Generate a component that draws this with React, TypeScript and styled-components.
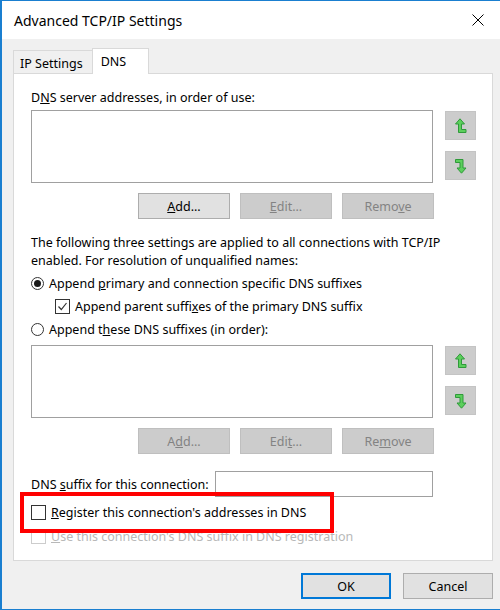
import React from 'react';
import styled, { createGlobalStyle } from 'styled-components';

const GlobalStyle = createGlobalStyle`
  html, body {
    margin: 0;
    padding: 0;
    background: #ffffff;
  }
  body {
    font-family: 'Noto Sans', 'Liberation Sans', sans-serif;
    font-size: 12.5px;
    color: #000000;
  }
`;

const Window = styled.div`
  position: relative;
  width: 498px;
  height: 608px;
  border-left: 2px solid #1a7fd0;
  border-top: 1px solid #1a7fd0;
  border-bottom: 1px solid #1a7fd0;
  display: flex;
  flex-direction: column;
  overflow: hidden;
`;

const TitleBar = styled.div`
  height: 38px;
  background: #ffffff;
  display: flex;
  align-items: center;
  justify-content: space-between;
  padding: 0 16px 0 12px;
  font-size: 14px;
`;

const CloseIcon = styled.svg`
  width: 12px;
  height: 12px;
`;

const Body = styled.div`
  flex: 1;
  background: #f0f0f0;
  padding: 9px 7px 0 11px;
  display: flex;
  flex-direction: column;
`;

const TabRow = styled.div`
  display: flex;
  align-items: flex-end;
  height: 25px;
`;

const Tab = styled.div<{ $active?: boolean }>`
  height: ${({ $active }) => ($active ? '26px' : '23px')};
  min-width: ${({ $active }) => ($active ? '57px' : '0')};
  padding: ${({ $active }) => ($active ? '0 8px' : '3px 9px 0 6px')};
  display: flex;
  align-items: center;
  background: ${({ $active }) => ($active ? '#ffffff' : '#f0f0f0')};
  border: 1px solid #d9d9d9;
  border-bottom: none;
  margin-left: ${({ $active }) => ($active ? '-1px' : '0')};
  margin-bottom: ${({ $active }) => ($active ? '-1px' : '0')};
  position: relative;
  z-index: ${({ $active }) => ($active ? 1 : 0)};
  box-sizing: border-box;
`;

const Panel = styled.div`
  position: relative;
  background: #ffffff;
  border: 1px solid #d9d9d9;
  height: 488px;
  box-sizing: border-box;
  padding: 16px 0 0 17px;
`;

const Label = styled.div`
  line-height: 16px;
`;

const ListArea = styled.div`
  display: flex;
  gap: 12px;
  margin-top: 4px;
`;

const ListBox = styled.div`
  width: 402px;
  height: 73px;
  border: 1px solid #a0a0a0;
  box-sizing: border-box;
  background: #ffffff;
`;

const SideButtons = styled.div`
  display: flex;
  flex-direction: column;
  gap: 11px;
  padding-top: 1px;
`;

const ArrowButton = styled.div`
  width: 31px;
  height: 29px;
  background: #cccccc;
  border: 1px solid #c4c4c4;
  box-sizing: border-box;
  display: flex;
  align-items: center;
  justify-content: center;
`;

const ButtonRow = styled.div`
  display: flex;
  gap: 10px;
  margin: 10px 0 0 107px;
`;

const PushButton = styled.div<{ $disabled?: boolean; $default?: boolean; $w?: number }>`
  width: ${({ $w }) => $w || 92}px;
  height: 26px;
  box-sizing: border-box;
  display: flex;
  align-items: center;
  justify-content: center;
  background: ${({ $disabled }) => ($disabled ? '#cccccc' : '#e1e1e1')};
  border: ${({ $disabled, $default }) =>
    $default ? '2px solid #0078d7' : $disabled ? '1px solid #bfbfbf' : '1px solid #adadad'};
  color: ${({ $disabled }) => ($disabled ? '#838383' : '#000000')};
`;

const Paragraph = styled.div`
  margin-top: 15px;
  line-height: 18px;
  width: 440px;
`;

const OptionRow = styled.div<{ $indent?: number; $disabled?: boolean; $top?: number }>`
  display: flex;
  align-items: center;
  gap: 5px;
  height: 23px;
  margin-left: ${({ $indent }) => $indent || 0}px;
  margin-top: ${({ $top }) => $top || 0}px;
  color: ${({ $disabled }) => ($disabled ? '#b8b8b8' : '#000000')};
`;

const Radio = styled.span<{ $checked?: boolean }>`
  width: 13px;
  height: 13px;
  border-radius: 50%;
  border: 1px solid #333333;
  box-sizing: border-box;
  display: flex;
  align-items: center;
  justify-content: center;
  &::after {
    content: '';
    display: ${({ $checked }) => ($checked ? 'block' : 'none')};
    width: 7px;
    height: 7px;
    border-radius: 50%;
    background: #1a1a1a;
  }
`;

const Check = styled.span<{ $disabled?: boolean }>`
  width: 15px;
  height: 15px;
  border: 1px solid ${({ $disabled }) => ($disabled ? '#cccccc' : '#333333')};
  box-sizing: border-box;
  display: flex;
  align-items: center;
  justify-content: center;
  background: #ffffff;
`;

const SuffixRow = styled.div`
  display: flex;
  align-items: center;
  gap: 6px;
  width: 402px;
  margin-top: 17px;
`;

const TextInput = styled.div`
  flex: 1;
  height: 26px;
  border: 1px solid #a0a0a0;
  box-sizing: border-box;
  background: #ffffff;
`;

const Highlight = styled.div`
  position: absolute;
  left: 6px;
  top: 418px;
  width: 314px;
  height: 41px;
  border: 4px solid #ff0000;
  box-sizing: border-box;
  pointer-events: none;
`;

const Footer = styled.div`
  display: flex;
  justify-content: flex-end;
  gap: 12px;
  margin-top: 12px;
`;

const UpArrow = () => (
  <svg width="12" height="16" viewBox="0 0 12 16">
    <polygon
      points="5,0.8 9.5,6 6.5,6 6.5,11.5 11,11.5 11,14.5 3.5,14.5 3.5,6 0.5,6"
      fill="#5ccf5c"
      stroke="#2f9a3a"
      strokeWidth="1"
      strokeLinejoin="round"
    />
  </svg>
);

const DownArrow = () => (
  <svg width="12" height="16" viewBox="0 0 12 16">
    <polygon
      points="0.5,1.5 8,1.5 8,10 11,10 6.5,15.2 2,10 5,10 5,4.5 0.5,4.5"
      fill="#5ccf5c"
      stroke="#2f9a3a"
      strokeWidth="1"
      strokeLinejoin="round"
    />
  </svg>
);

const CheckMark = () => (
  <svg width="11" height="11" viewBox="0 0 11 11">
    <polyline points="1.5,5.5 4.3,8.5 9.5,2" fill="none" stroke="#333333" strokeWidth="1.2" />
  </svg>
);

const ListWithArrows = () => (
  <ListArea>
    <ListBox />
    <SideButtons>
      <ArrowButton>
        <UpArrow />
      </ArrowButton>
      <ArrowButton>
        <DownArrow />
      </ArrowButton>
    </SideButtons>
  </ListArea>
);

const App = () => {
  return (
    <>
      <GlobalStyle />
      <Window>
        <TitleBar>
          <span>Advanced TCP/IP Settings</span>
          <CloseIcon viewBox="0 0 12 12">
            <path d="M0.5 0.5 L11.5 11.5 M11.5 0.5 L0.5 11.5" stroke="#000" strokeWidth="1" />
          </CloseIcon>
        </TitleBar>
        <Body>
          <TabRow>
            <Tab>IP Settings</Tab>
            <Tab $active>DNS</Tab>
          </TabRow>
          <Panel>
            <Label>
              D<u>N</u>S server addresses, in order of use:
            </Label>
            <ListWithArrows />
            <ButtonRow>
              <PushButton>
                <span>
                  <u>A</u>dd...
                </span>
              </PushButton>
              <PushButton $disabled>
                <span>
                  <u>E</u>dit...
                </span>
              </PushButton>
              <PushButton $disabled>
                <span>
                  Remo<u>v</u>e
                </span>
              </PushButton>
            </ButtonRow>

            <Paragraph>
              The following three settings are applied to all connections with TCP/IP enabled. For resolution of
              unqualified names:
            </Paragraph>
            <OptionRow $top={2}>
              <Radio $checked />
              <span>
                Append <u>p</u>rimary and connection specific DNS suffixes
              </span>
            </OptionRow>
            <OptionRow $indent={24}>
              <Check>
                <CheckMark />
              </Check>
              <span>
                Append parent suffi<u>x</u>es of the primary DNS suffix
              </span>
            </OptionRow>
            <OptionRow>
              <Radio />
              <span>
                Append t<u>h</u>ese DNS suffixes (in order):
              </span>
            </OptionRow>
            <ListWithArrows />
            <ButtonRow>
              <PushButton $disabled>
                <span>
                  A<u>d</u>d...
                </span>
              </PushButton>
              <PushButton $disabled>
                <span>
                  Edi<u>t</u>...
                </span>
              </PushButton>
              <PushButton $disabled>
                <span>
                  Re<u>m</u>ove
                </span>
              </PushButton>
            </ButtonRow>

            <SuffixRow>
              <span>
                DNS <u>s</u>uffix for this connection:
              </span>
              <TextInput />
            </SuffixRow>
            <OptionRow $top={4}>
              <Check />
              <span>
                <u>R</u>egister this connection's addresses in DNS
              </span>
            </OptionRow>
            <OptionRow $disabled $top={1}>
              <Check $disabled />
              <span>
                <u>U</u>se this connection's DNS suffix in DNS registration
              </span>
            </OptionRow>
            <Highlight />
          </Panel>
          <Footer>
            <PushButton $default $w={90}>
              OK
            </PushButton>
            <PushButton $w={90}>Cancel</PushButton>
          </Footer>
        </Body>
      </Window>
    </>
  );
};

export default App;
